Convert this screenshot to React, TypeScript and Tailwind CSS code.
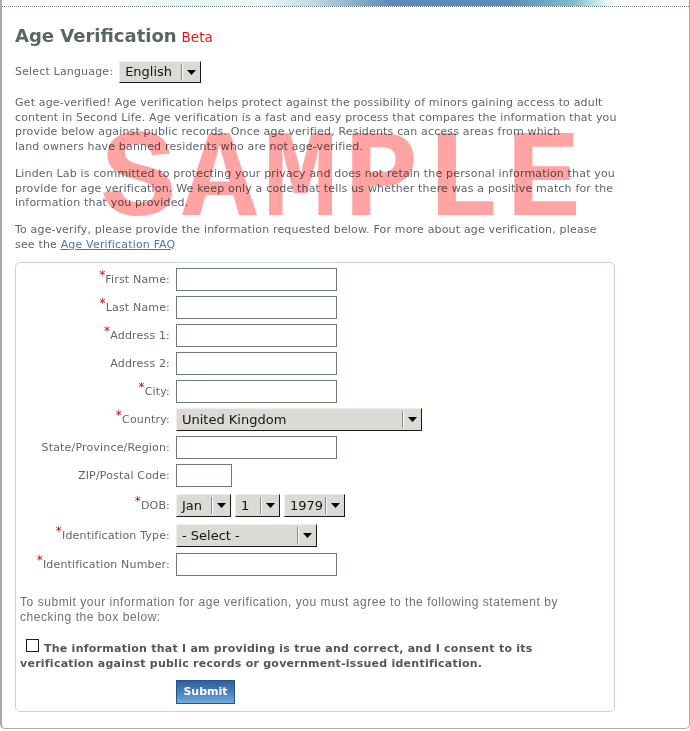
import React from 'react';

const Arrow = () => (
    <svg width="9" height="5" viewBox="0 0 9 5"><path d="M0 0h9L4.5 5z" fill="#000" /></svg>
)

const FakeSelect = ({ value, className }: { value: string; className: string }) => (
    <div className={`flex items-stretch bg-[#dcdad5] border-t border-l border-t-[#efeeeb] border-l-[#efeeeb] border-b border-r border-b-[#1a1a1a] border-r-[#1a1a1a] text-[13px] tracking-normal text-[#141414] ${className}`}>
        <div className="flex-1 flex items-center pl-[5px] whitespace-nowrap overflow-hidden">{value}</div>
        <div className="flex items-center my-[2px] border-l border-l-[#8a8986] shadow-[inset_1px_0_0_#ffffff] pl-[5px] pr-[4px]">
            <Arrow />
        </div>
    </div>
)

const Req = () => <span className="text-[#e00000] text-[12px] relative -top-[5px]">*</span>

const Row = ({ label, req, children, className }: { label: string; req?: boolean; children: React.ReactNode; className: string }) => (
    <div className={`flex ${className}`}>
        <div className="w-[154px] h-[23px] flex items-center justify-end whitespace-nowrap">
            {req && <Req />}{label}
        </div>
        <div className="ml-[6px]">{children}</div>
    </div>
)

const Input = ({ className }: { className: string }) => (
    <div className={`h-[23px] border border-[#6b7a72] bg-white ${className}`} />
)

const App = () => {
    return (
        <div className="w-[690px] h-[731px] bg-white font-['DejaVu_Sans',sans-serif] text-[11px] tracking-[0.17px] text-[#5d676a]">
            <div className="relative h-[729px] border-l-2 border-r border-b border-[#ababab] rounded-b-[5px] overflow-hidden">
                <div className="h-[6px] bg-[linear-gradient(90deg,#ffffff_0px,#ffffff_115px,#e4f7f3_175px,#eefbfb_255px,#bcd6e3_315px,#5b8ab8_390px,#5a8bb8_505px,#7dbdd0_572px,#e0f4f4_603px,#ffffff_616px)]" />
                <div className="border-b border-dotted border-[#6c7e80]" />

                <div className="absolute left-[99px] top-[120px] font-['Liberation_Mono',monospace] font-bold text-[125px] tracking-[6px] leading-none text-[#ffa3a3] mix-blend-multiply pointer-events-none select-none">
                    SAMPLE
                </div>

                <div className="pl-[13px] w-[615px]">
                    <div className="mt-[18px] flex items-baseline leading-[22px] tracking-normal">
                        <span className="text-[18px] font-bold text-[#5b6568]">Age Verification</span>
                        <span className="ml-[5px] text-[13.5px] text-[#ee1111]">Beta</span>
                    </div>

                    <div className="mt-[13px] flex items-center">
                        <span>Select Language:</span>
                        <FakeSelect value="English" className="ml-[6px] w-[82px] h-[22px]" />
                    </div>

                    <p className="mt-[13px] leading-[14.7px]">
                        Get age-verified! Age verification helps protect against the possibility of minors gaining access to adult content in Second Life. Age verification is a fast and easy process that compares the information that you provide below against public records. Once age verified, Residents can access areas from which<br />land owners have banned residents who are not age-verified.
                    </p>
                    <p className="mt-[12px] leading-[14.7px]">
                        Linden Lab is committed to protecting your privacy and does not retain the personal information that you provide for age verification. We keep only a code that tells us whether there was a positive match for the information that you provided.
                    </p>
                    <p className="mt-[12px] leading-[14.7px]">
                        To age-verify, please provide the information requested below. For more about age verification, please see the <a className="text-[#4a78a6] underline">Age Verification FAQ</a>
                    </p>

                    <div className="mt-[10px] w-[600px] border border-[#c6d3df] rounded-[5px] pt-[5px] pb-[7px]">
                        <Row label="First Name:" req className="mb-[5px]"><Input className="w-[161px]" /></Row>
                        <Row label="Last Name:" req className="mb-[5px]"><Input className="w-[161px]" /></Row>
                        <Row label="Address 1:" req className="mb-[5px]"><Input className="w-[161px]" /></Row>
                        <Row label="Address 2:" className="mb-[5px]"><Input className="w-[161px]" /></Row>
                        <Row label="City:" req className="mb-[5px]"><Input className="w-[161px]" /></Row>
                        <Row label="Country:" req className="mb-[5px]"><FakeSelect value="United Kingdom" className="w-[246px] h-[23px]" /></Row>
                        <Row label="State/Province/Region:" className="mb-[5px]"><Input className="w-[161px]" /></Row>
                        <Row label="ZIP/Postal Code:" className="mb-[7px]"><Input className="w-[56px]" /></Row>
                        <Row label="DOB:" req className="mb-[7px]">
                            <div className="flex">
                                <FakeSelect value="Jan" className="w-[55px] h-[23px]" />
                                <FakeSelect value="1" className="ml-[4px] w-[45px] h-[23px]" />
                                <FakeSelect value="1979" className="ml-[4px] w-[61px] h-[23px]" />
                            </div>
                        </Row>
                        <Row label="Identification Type:" req className="mb-[6px]"><FakeSelect value="- Select -" className="w-[141px] h-[23px]" /></Row>
                        <Row label="Identification Number:" req className=""><Input className="w-[161px]" /></Row>

                        <div className="px-[4px]">
                            <p className="mt-[19px] font-['Liberation_Sans',sans-serif] text-[12px] tracking-[0.55px] leading-[15px] text-[#6a7375]">
                                To submit your information for age verification, you must agree to the following statement by checking the box below:
                            </p>
                            <p className="mt-[14px] font-bold tracking-[0.25px] leading-[15px] text-[#4d585b]">
                                <span className="inline-block w-[13px] h-[13px] border border-[#1c1c1c] bg-white ml-[6px] mr-[5px]" />
                                The information that I am providing is true and correct, and I consent to its verification against public records or government-issued identification.
                            </p>
                            <div
                                className="mt-[9px] ml-[156px] w-[59px] h-[24px] flex items-center justify-center border border-[#24558c] bg-[linear-gradient(180deg,#2f609b,#4a83c0_55%,#73acde)] text-white font-bold tracking-normal">
                                Submit
                            </div>
                        </div>
                    </div>
                </div>
            </div>
        </div>
    )
}

export default App
